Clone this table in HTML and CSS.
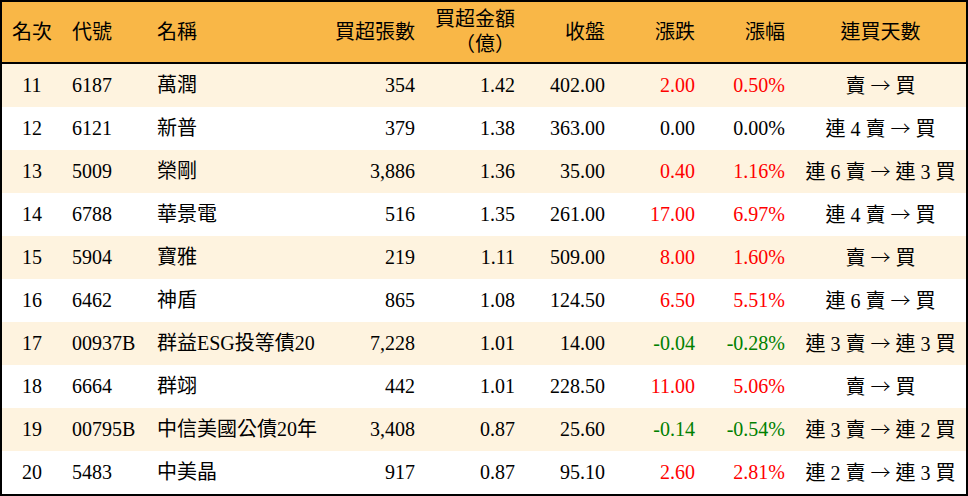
FILE: index.html
```html
<!DOCTYPE html>
<html lang="zh-Hant">
<head>
<meta charset="utf-8">
<title>買超排行</title>
<link rel="stylesheet" href="styles.css">
</head>
<body>
<div class="table">
  <div class="row head">
    <div class="c center">名次</div>
    <div class="c left">代號</div>
    <div class="c left">名稱</div>
    <div class="c right">買超張數</div>
    <div class="c right">買超金額<br>（億）</div>
    <div class="c right">收盤</div>
    <div class="c right">漲跌</div>
    <div class="c right">漲幅</div>
    <div class="c center">連買天數</div>
  </div>
  <div class="row alt">
    <div class="c center">11</div><div class="c left">6187</div><div class="c left">萬潤</div>
    <div class="c right">354</div><div class="c right">1.42</div><div class="c right">402.00</div>
    <div class="c right up">2.00</div><div class="c right up">0.50%</div><div class="c center">賣 <span class="arrow">→</span> 買</div>
  </div>
  <div class="row">
    <div class="c center">12</div><div class="c left">6121</div><div class="c left">新普</div>
    <div class="c right">379</div><div class="c right">1.38</div><div class="c right">363.00</div>
    <div class="c right">0.00</div><div class="c right">0.00%</div><div class="c center">連 4 賣 <span class="arrow">→</span> 買</div>
  </div>
  <div class="row alt">
    <div class="c center">13</div><div class="c left">5009</div><div class="c left">榮剛</div>
    <div class="c right">3,886</div><div class="c right">1.36</div><div class="c right">35.00</div>
    <div class="c right up">0.40</div><div class="c right up">1.16%</div><div class="c center">連 6 賣 <span class="arrow">→</span> 連 3 買</div>
  </div>
  <div class="row">
    <div class="c center">14</div><div class="c left">6788</div><div class="c left">華景電</div>
    <div class="c right">516</div><div class="c right">1.35</div><div class="c right">261.00</div>
    <div class="c right up">17.00</div><div class="c right up">6.97%</div><div class="c center">連 4 賣 <span class="arrow">→</span> 買</div>
  </div>
  <div class="row alt">
    <div class="c center">15</div><div class="c left">5904</div><div class="c left">寶雅</div>
    <div class="c right">219</div><div class="c right">1.11</div><div class="c right">509.00</div>
    <div class="c right up">8.00</div><div class="c right up">1.60%</div><div class="c center">賣 <span class="arrow">→</span> 買</div>
  </div>
  <div class="row">
    <div class="c center">16</div><div class="c left">6462</div><div class="c left">神盾</div>
    <div class="c right">865</div><div class="c right">1.08</div><div class="c right">124.50</div>
    <div class="c right up">6.50</div><div class="c right up">5.51%</div><div class="c center">連 6 賣 <span class="arrow">→</span> 買</div>
  </div>
  <div class="row alt">
    <div class="c center">17</div><div class="c left">00937B</div><div class="c left">群益ESG投等債20</div>
    <div class="c right">7,228</div><div class="c right">1.01</div><div class="c right">14.00</div>
    <div class="c right down">-0.04</div><div class="c right down">-0.28%</div><div class="c center">連 3 賣 <span class="arrow">→</span> 連 3 買</div>
  </div>
  <div class="row">
    <div class="c center">18</div><div class="c left">6664</div><div class="c left">群翊</div>
    <div class="c right">442</div><div class="c right">1.01</div><div class="c right">228.50</div>
    <div class="c right up">11.00</div><div class="c right up">5.06%</div><div class="c center">賣 <span class="arrow">→</span> 買</div>
  </div>
  <div class="row alt">
    <div class="c center">19</div><div class="c left">00795B</div><div class="c left">中信美國公債20年</div>
    <div class="c right">3,408</div><div class="c right">0.87</div><div class="c right">25.60</div>
    <div class="c right down">-0.14</div><div class="c right down">-0.54%</div><div class="c center">連 3 賣 <span class="arrow">→</span> 連 2 買</div>
  </div>
  <div class="row">
    <div class="c center">20</div><div class="c left">5483</div><div class="c left">中美晶</div>
    <div class="c right">917</div><div class="c right">0.87</div><div class="c right">95.10</div>
    <div class="c right up">2.60</div><div class="c right up">2.81%</div><div class="c center">連 2 賣 <span class="arrow">→</span> 連 3 買</div>
  </div>
</div>
</body>
</html>
```

FILE: styles.css
```css
html, body {
  margin: 0;
  padding: 0;
  background: #ffffff;
}

body {
  font-family: "Liberation Serif", "Noto Sans CJK TC", serif;
  font-size: 20px;
  color: #000000;
}

.table {
  box-sizing: border-box;
  width: 968px;
  height: 496px;
  border: 2px solid #000000;
  background: #ffffff;
}

.row {
  display: grid;
  grid-template-columns: 60px 85px 170px 108px 100px 90px 90px 90px 1fr;
  align-items: center;
  height: 43px;
  line-height: 25px;
  white-space: nowrap;
}

.row.head {
  height: 60px;
  background: #f9b747;
  border-bottom: 2px solid #000000;
}

.row.alt {
  background: #fef3df;
}

.center {
  text-align: center;
}

.left {
  text-align: left;
  padding-left: 10px;
}

.right {
  text-align: right;
  padding-right: 10px;
}

.arrow {
  font-family: "Noto Sans CJK TC", sans-serif;
  font-weight: 300;
}

.up {
  color: #ff0000;
}

.down {
  color: #008000;
}
```
